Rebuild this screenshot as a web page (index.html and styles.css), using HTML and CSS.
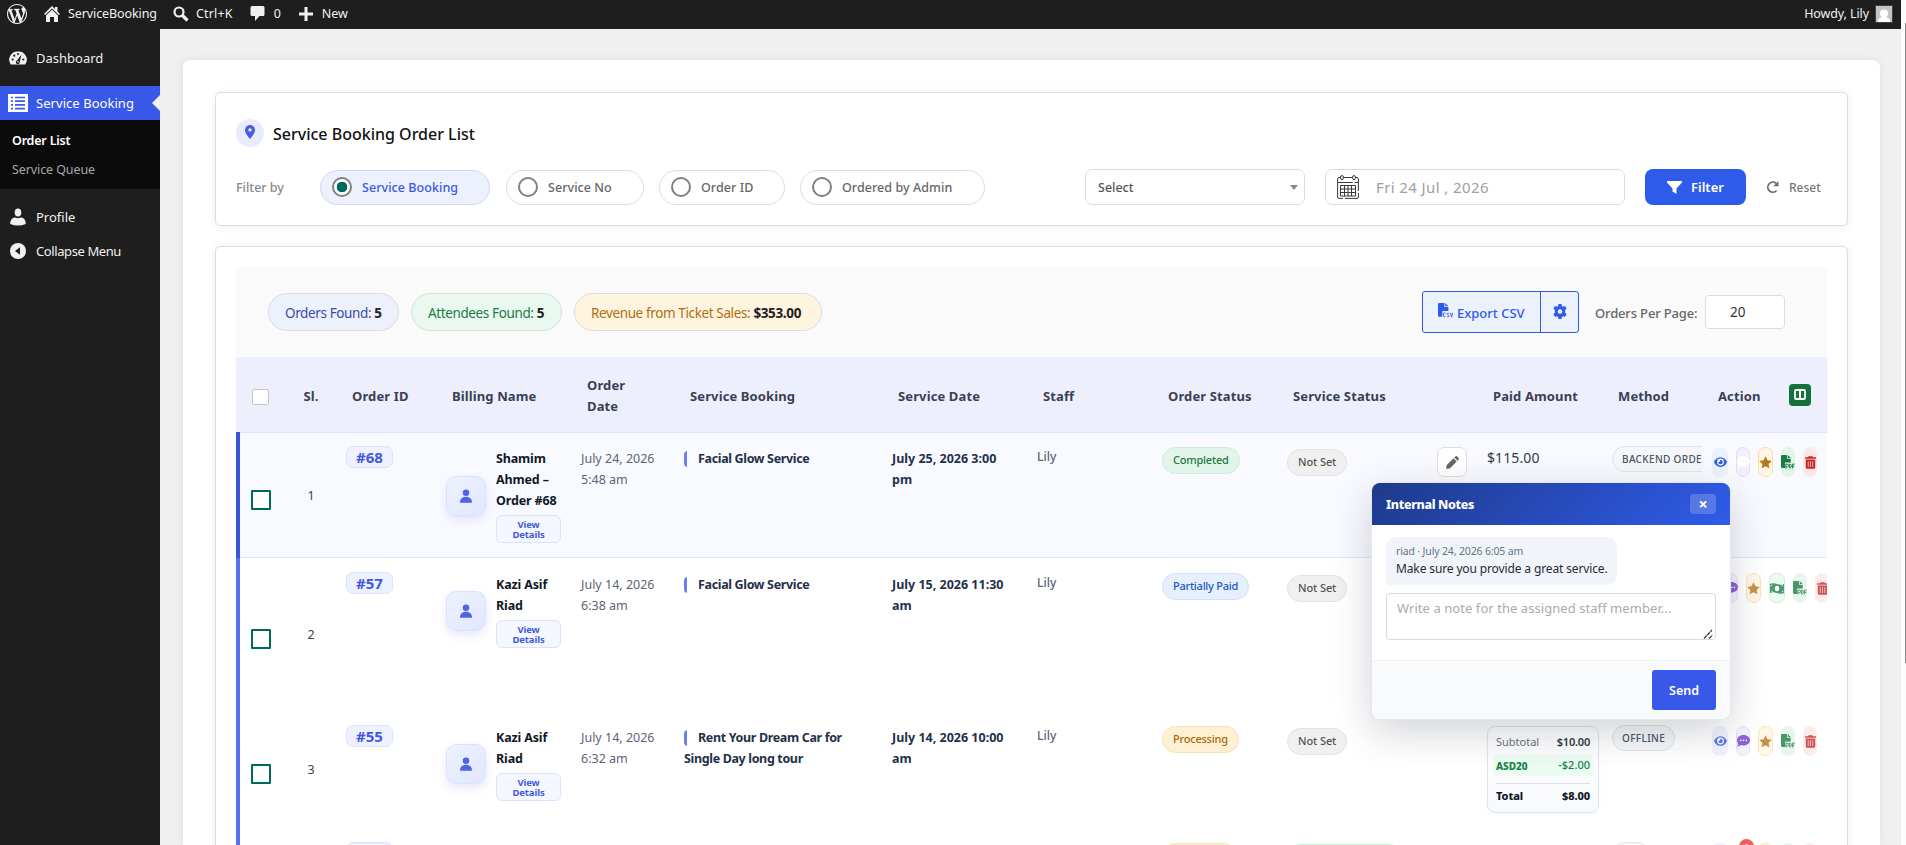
FILE: index.html
```html
<!DOCTYPE html>
<html lang="en">
<head>
    <meta charset="UTF-8">
    <meta name="viewport" content="width=device-width, initial-scale=1.0">
    <title>Service Booking Order List</title>
    <link rel="stylesheet" href="styles.css">
</head>
<body>
    <!-- Shared icons -->
    <svg class="sprite">
        <symbol id="i-user" viewBox="0 0 14 16"><circle cx="7" cy="4.2" r="3.8"/><path d="M0 16c0-4.500 2.500-7 7-7s7 2.500 7 7z"/></symbol>
        <symbol id="i-eye" viewBox="0 0 24 18"><path d="M12 0C6 0 2 4 0 9c2 5 6 9 12 9s10-4 12-9c-2-5-6-9-12-9z"/><circle cx="12" cy="9" r="6.300" fill="#fff"/><path d="M12 4.800a4.200 4.200 0 1 1-4.200 4.200c1.800.6 3.600-.6 4.200-4.200z"/></symbol>
        <symbol id="i-chat" viewBox="0 0 24 22"><path d="M12 0c6.600 0 12 4.300 12 9.700s-5.400 9.700-12 9.700c-1.800 0-3.500-.3-5-.9C5.500 20 3 21.500 0 21.500c1.500-1.600 2.300-3.400 2.400-5C.9 14.600 0 12.300 0 9.700 0 4.300 5.400 0 12 0z"/><g fill="#f3effe"><circle cx="6.800" cy="9.700" r="1.600"/><circle cx="12" cy="9.700" r="1.600"/><circle cx="17.200" cy="9.700" r="1.600"/></g></symbol>
        <symbol id="i-star" viewBox="0 0 24 23"><path d="M12 0l3.500 7.400 8.200 1.100-6 5.600 1.500 8.100L12 18.300l-7.200 3.900 1.500-8.100-6-5.600 8.200-1.100z"/></symbol>
        <symbol id="i-file" viewBox="0 0 26 26"><path d="M0 2a2 2 0 0 1 2-2h9v7h7v7H7.500v10H2a2 2 0 0 1-2-2zM12.500 0l5.500 5.500h-5.500z"/><path d="M9 25v-8h2.500a2 2 0 0 1 0 5H9M15.500 17v7h1.500c3 0 3-7 0-7zM21.500 25v-8h4M21.500 21h3.500" fill="none" stroke="currentColor" stroke-width="1.800"/></symbol>
        <symbol id="i-csv" viewBox="0 0 26 26"><path d="M0 2a2 2 0 0 1 2-2h9v7h7v7H7.500v10H2a2 2 0 0 1-2-2zM12.500 0l5.500 5.500h-5.500z"/><path d="M13 18.500c0-2-3.500-2-3.500 0v4c0 2 3.500 2 3.500 0M19 18.500c-1-2-3.500-1-3 .7s3 1.500 3 3.300-2.500 2.200-3.500.5M21.500 17l2 7.500 2-7.500" fill="none" stroke="currentColor" stroke-width="1.600"/></symbol>
        <symbol id="i-trash" viewBox="0 0 22 25"><path d="M7 0h8l1 2h6v3H0V2h6zM1.500 6.500h19V22a3 3 0 0 1-3 3h-13a3 3 0 0 1-3-3z"/><path d="M6.500 10v11.500M11 10v11.500M15.500 10v11.500" stroke="#fbd5d5" stroke-width="1.500"/></symbol>
        <symbol id="i-money" viewBox="0 0 28 22"><path d="M0 2c4-2.500 9-2 14 0s10 2.500 14 0v18c-4 2.500-9 2-14 0s-10-2.500-14 0z"/><ellipse cx="14" cy="11" rx="4.500" ry="5.500" fill="#fff"/><path d="M2.500 7V4.500q2.500 0 2.500-1M25.500 15v2.500q-2.500 0-2.500 1M2.500 16q2.500 0 3 2.500M25.500 6q-2.500 0-3-2.500" stroke="#fff" stroke-width="1.500" fill="none"/></symbol>
    </svg>

    <header class="adminbar">
        <svg class="wp-logo" viewBox="0 0 20 20"><path fill="currentColor" d="M20 10c0-5.510-4.490-10-10-10C4.480 0 0 4.490 0 10c0 5.520 4.480 10 10 10 5.510 0 10-4.480 10-10zM7.780 15.370L4.370 6.220c.55-.02 1.170-.08 1.170-.08.5-.06.44-1.130-.06-1.110 0 0-1.450.11-2.370.11-.18 0-.37 0-.58-.01C4.120 2.690 6.870 1.110 10 1.110c2.330 0 4.450.87 6.050 2.340-.68-.11-1.650.39-1.650 1.580 0 .74.45 1.360.9 2.100.35.61.55 1.360.55 2.460 0 1.490-1.400 5-1.400 5l-3.030-8.370c.54-.02.82-.17.82-.17.5-.05.44-1.250-.06-1.220 0 0-1.440.12-2.380.12-.87 0-2.330-.12-2.330-.12-.5-.03-.56 1.200-.06 1.220l.92.08 1.260 3.410zM17.410 10c.24-.64.74-1.870.43-4.250.7 1.290 1.050 2.710 1.050 4.250 0 3.290-1.730 6.240-4.400 7.780.97-2.590 1.940-5.200 2.920-7.780zM6.100 18.090C3.120 16.650 1.110 13.530 1.110 10c0-1.300.23-2.480.72-3.590C3.250 10.300 4.670 14.200 6.100 18.090zm4.030-6.630l2.580 6.980c-.86.29-1.760.45-2.710.45-.79 0-1.570-.11-2.290-.33.81-2.380 1.620-4.740 2.420-7.100z"/></svg>
        <a class="bar-item bar-home">
            <svg width="16" height="16" viewBox="0 0 16 16"><path d="M8 0l3 3V1h2.500v4.500L16 8l-1.200 1L8 2.500 1.200 9 0 8z" fill="currentColor"/><path d="M2 9.500l6-5.700 6 5.700V16h-4v-5H6v5H2z" fill="currentColor"/></svg>
            <span>ServiceBooking</span>
        </a>
        <a class="bar-item bar-search">
            <svg width="16" height="16" viewBox="0 0 16 16"><circle cx="6" cy="6" r="4.500" fill="none" stroke="currentColor" stroke-width="2.200"/><path d="M9 9l5.500 5.500" stroke="currentColor" stroke-width="3.200"/></svg>
            <span>Ctrl+K</span>
        </a>
        <a class="bar-item bar-comments">
            <svg width="15" height="17" viewBox="0 0 15 17"><path d="M2 1h11a1.500 1.500 0 0 1 1.500 1.500v7A1.500 1.500 0 0 1 13 11H9.500L5 16v-5H2A1.500 1.500 0 0 1 .5 9.500v-7A1.500 1.500 0 0 1 2 1z" fill="currentColor"/></svg>
            <span>0</span>
        </a>
        <a class="bar-item bar-new">
            <svg width="14" height="14" viewBox="0 0 14 14"><path d="M7 0v14M0 7h14" stroke="currentColor" stroke-width="3"/></svg>
            <span>New</span>
        </a>
        <a class="bar-user">
            <span>Howdy, Lily</span>
            <svg width="18" height="18" viewBox="0 0 18 18"><path fill="#3c3f44" d="M0 0h18v18H0z"/><path fill="#c5c5c5" d="M1 1h16v16H1z"/><circle cx="9" cy="8.500" r="4" fill="#fff"/><path d="M3 17c0-3.500 2-5 6-5s6 1.500 6 5z" fill="#fff"/></svg>
        </a>
    </header>

    <div class="wrap">
        <aside class="sidebar">
            <a class="menu-item menu-dash"><svg width="18" height="18" viewBox="0 0 18 18"><path d="M9 2.500A8.200 8.200 0 0 0 1.800 15.500h14.400A8.200 8.200 0 0 0 9 2.500z" fill="#f0f0f1"/><g fill="#1e1e1e"><circle cx="3.700" cy="10.500" r="1.100"/><circle cx="5.300" cy="6.700" r="1.100"/><circle cx="9" cy="5" r="1.100"/><circle cx="14.300" cy="10.500" r="1.100"/><path d="M12.500 5.500l-1.700 7.300a2 2 0 1 1-2.600-1.600z"/></g><circle cx="8.900" cy="12.800" r=".8" fill="#f0f0f1"/></svg><span>Dashboard</span></a>
            <a class="menu-item menu-active"><svg width="20" height="18" viewBox="0 0 20 18"><path d="M0 0h20v18H0z" fill="#fff"/><path d="M3 3.500h2M7 3.500h10M3 7.200h2M7 7.200h10M3 10.900h2M7 10.900h10M3 14.600h2M7 14.600h10" stroke="#3858e9" stroke-width="1.700"/></svg><span>Service Booking</span></a>
            <div class="submenu">
                <a class="current">Order List</a>
                <a>Service Queue</a>
            </div>
            <a class="menu-item menu-profile"><svg width="18" height="18" viewBox="0 0 18 18" fill="#f0f0f1"><ellipse cx="9" cy="4.500" rx="3.300" ry="4"/><path d="M1.200 16c0-4.500 2.500-6.500 5-6.500Q9 11 11.800 9.500c2.500 0 5 2 5 6.500Q9 19 1.200 16z"/></svg><span>Profile</span></a>
            <a class="menu-item menu-collapse"><svg width="18" height="18" viewBox="0 0 18 18"><circle cx="9" cy="9" r="8" fill="#f0f0f1"/><path d="M11 5.200v7.600L6 9z" fill="#1e1e1e"/></svg><span>Collapse Menu</span></a>
        </aside>

        <main class="content">
            <section class="panel filter-panel">
                <div class="panel-title">
                    <span class="title-icon"><svg width="10" height="14" viewBox="0 0 10 14"><path fill-rule="evenodd" d="M5 0a5 5 0 0 1 5 5c0 3-3.500 7-5 9-1.500-2-5-6-5-9a5 5 0 0 1 5-5zm0 3.200a1.700 1.700 0 1 0 0 3.400 1.700 1.700 0 0 0 0-3.400z" fill="#4a5bdc"/></svg></span>
                    <h1>Service Booking Order List</h1>
                </div>
                <div class="filter-row">
                    <span class="filter-label">Filter by</span>
                    <div class="chips">
                        <label class="chip chip-1 checked"><i class="radio"></i><span>Service Booking</span></label>
                        <label class="chip chip-2"><i class="radio"></i><span>Service No</span></label>
                        <label class="chip chip-3"><i class="radio"></i><span>Order ID</span></label>
                        <label class="chip chip-4"><i class="radio"></i><span>Ordered by Admin</span></label>
                    </div>
                    <div class="select"><span>Select</span><i class="caret"></i></div>
                    <div class="date">
                        <svg width="22" height="24" viewBox="0 0 22 24" fill="none" stroke="#3a3a3a"><path d="M3.500 2.500H2A1.500 1.500 0 0 0 .6 4v18A1.500 1.500 0 0 0 2 23.400h4M8 23.400h12a1.500 1.500 0 0 0 1.400-1.400v-4M21.400 16V4A1.500 1.500 0 0 0 20 2.500h-1.500M6.500 2.500h9M.6 7.500h15M17.500 7.500h4"/><rect x="3.600" y=".6" width="2.800" height="4" rx="1.400"/><rect x="15.600" y=".6" width="2.800" height="4" rx="1.400"/><path d="M3.500 10.500h15v10.500h-15zM7.500 10.500V21M11 10.500V21M14.500 10.500V21M3.500 14h15M3.500 17.500h15"/></svg>
                        <span>Fri 24 Jul , 2026</span>
                    </div>
                    <button class="btn-filter"><svg width="15" height="13" viewBox="0 0 15 13"><path d="M0 0h15v1.500L9.500 7.500V13l-4-2.500v-3L0 1.500z" fill="#fff"/></svg>Filter</button>
                    <a class="reset"><svg width="13" height="13" viewBox="0 0 13 13"><path d="M10 2.300A5 5 0 1 0 10.600 9.500" fill="none" stroke="#6b6b6b" stroke-width="1.800"/><path d="M12.500 0v5.200H7.300z" fill="#6b6b6b"/></svg>Reset</a>
                </div>
            </section>

            <section class="panel list-panel">
                <div class="toolbar">
                    <div class="stats">
                        <span class="stat stat-orders">Orders Found: <b>5</b></span>
                        <span class="stat stat-attendees">Attendees Found: <b>5</b></span>
                        <span class="stat stat-revenue">Revenue from Ticket Sales: <b>$353.00</b></span>
                    </div>
                    <div class="tools">
                        <div class="export">
                            <a class="export-main"><svg width="15" height="15"><use href="#i-csv"/></svg><span>Export CSV</span></a>
                            <a class="export-gear"><svg width="14" height="15" viewBox="0 0 14 15"><path d="M5.500 0h3l.4 2 1.200.7 1.900-.8 1.600 2.700-1.500 1.500v2.700l1.500 1.500-1.600 2.600-1.900-.7-1.200.7-.4 2.100h-3l-.4-2.100-1.200-.7-1.900.7L.4 10.300l1.500-1.500V6.100L.4 4.600 2 1.900l1.900.8L5.100 2z" fill="currentColor"/><circle cx="7" cy="7.500" r="2.300" fill="#ecf1fe"/></svg></a>
                        </div>
                        <span class="per-label">Orders Per Page:</span>
                        <span class="per-input">20</span>
                    </div>
                </div>

                <table class="orders">
                    <colgroup><col class="c-check"><col class="c-sl"><col class="c-id"><col class="c-name"><col class="c-date"><col class="c-service"><col class="c-sdate"><col class="c-staff"><col class="c-ostatus"><col class="c-sstatus"><col class="c-paid"><col class="c-method"><col class="c-action"></colgroup>
                    <thead>
                        <tr>
                            <th><i class="box-sm"></i></th>
                            <th class="center">Sl.</th>
                            <th>Order ID</th>
                            <th>Billing Name</th>
                            <th>Order<br>Date</th>
                            <th>Service Booking</th>
                            <th>Service Date</th>
                            <th>Staff</th>
                            <th>Order Status</th>
                            <th>Service Status</th>
                            <th>Paid Amount</th>
                            <th>Method</th>
                            <th><div class="th-action">Action<span class="cols-btn"><svg width="12" height="11" viewBox="0 0 12 11"><rect x="1" y="1" width="10" height="9" rx="1" fill="none" stroke="#fff" stroke-width="1.800"/><path d="M6 1v9" stroke="#fff" stroke-width="2"/></svg></span></div></th>
                        </tr>
                    </thead>
                    <tbody>
                        <tr class="row-1 hovered">
                            <td class="mid"><i class="box"></i></td>
                            <td class="mid center num">1</td>
                            <td><span class="oid">#68</span></td>
                            <td><div class="person"><span class="avatar"><svg width="12" height="14"><use href="#i-user"/></svg></span><div><div class="pname">Shamim<br>Ahmed &ndash;<br>Order #68</div><a class="details">View<br>Details</a></div></div></td>
                            <td class="odate">July 24, 2026<br>5:48 am</td>
                            <td class="service"><i class="mark"></i>Facial Glow Service</td>
                            <td class="sdate">July 25, 2026 3:00<br>pm</td>
                            <td class="staff">Lily</td>
                            <td><span class="tag green">Completed</span></td>
                            <td><div class="sstatus"><span class="tag grey">Not Set</span><span class="edit"><svg width="13" height="13" viewBox="0 0 13 13"><path d="M0 13l.8-4L7.500 2.300l3.200 3.200L4 12.200zM8.300 1.500L9.500.4q.8-.7 1.600 0l1.500 1.500q.7.8 0 1.600l-1.100 1.200z" fill="#666"/></svg></span></div></td>
                            <td class="amount">$115.00</td>
                            <td><div class="clip"><span class="method">BACKEND ORDER</span></div></td>
                            <td><div class="actions">
                                <span class="act eye"><svg width="13" height="10"><use href="#i-eye"/></svg></span>
                                <span class="act chat on"><svg width="13" height="12"><use href="#i-chat"/></svg></span>
                                <span class="act star"><svg width="13" height="13"><use href="#i-star"/></svg></span>
                                <span class="act pdf"><svg width="14" height="14"><use href="#i-file"/></svg></span>
                                <span class="act trash"><svg width="11" height="13"><use href="#i-trash"/></svg></span>
                            </div></td>
                        </tr>
                        <tr class="row-2">
                            <td class="mid"><i class="box"></i></td>
                            <td class="mid center num">2</td>
                            <td><span class="oid">#57</span></td>
                            <td><div class="person"><span class="avatar"><svg width="12" height="14"><use href="#i-user"/></svg></span><div><div class="pname">Kazi Asif<br>Riad</div><a class="details">View<br>Details</a></div></div></td>
                            <td class="odate">July 14, 2026<br>6:38 am</td>
                            <td class="service"><i class="mark"></i>Facial Glow Service</td>
                            <td class="sdate">July 15, 2026 11:30<br>am</td>
                            <td class="staff">Lily</td>
                            <td><span class="tag blue">Partially Paid</span></td>
                            <td><div class="sstatus"><span class="tag grey">Not Set</span></div></td>
                            <td></td>
                            <td></td>
                            <td><div class="actions actions-wide">
                                <span class="act chat"><svg width="13" height="12"><use href="#i-chat"/></svg></span>
                                <span class="act star"><svg width="13" height="13"><use href="#i-star"/></svg></span>
                                <span class="act money"><svg width="14" height="11"><use href="#i-money"/></svg></span>
                                <span class="act pdf"><svg width="14" height="14"><use href="#i-file"/></svg></span>
                                <span class="act trash"><svg width="11" height="13"><use href="#i-trash"/></svg></span>
                            </div></td>
                        </tr>
                        <tr class="row-3">
                            <td class="mid"><i class="box"></i></td>
                            <td class="mid center num">3</td>
                            <td><span class="oid">#55</span></td>
                            <td><div class="person"><span class="avatar"><svg width="12" height="14"><use href="#i-user"/></svg></span><div><div class="pname">Kazi Asif<br>Riad</div><a class="details">View<br>Details</a></div></div></td>
                            <td class="odate">July 14, 2026<br>6:32 am</td>
                            <td class="service"><i class="mark"></i>Rent Your Dream Car for<br>Single Day long tour</td>
                            <td class="sdate">July 14, 2026 10:00<br>am</td>
                            <td class="staff">Lily</td>
                            <td><span class="tag amber">Processing</span></td>
                            <td><div class="sstatus"><span class="tag grey">Not Set</span></div></td>
                            <td><div class="totals">
                                <div class="t-line"><span>Subtotal</span><b>$10.00</b></div>
                                <div class="t-line coupon"><b>ASD20</b><span>-$2.00</span></div>
                                <div class="t-line total"><b>Total</b><b>$8.00</b></div>
                            </div></td>
                            <td><span class="method">OFFLINE</span></td>
                            <td><div class="actions">
                                <span class="act eye"><svg width="13" height="10"><use href="#i-eye"/></svg></span>
                                <span class="act chat"><svg width="13" height="12"><use href="#i-chat"/></svg></span>
                                <span class="act star"><svg width="13" height="13"><use href="#i-star"/></svg></span>
                                <span class="act pdf"><svg width="14" height="14"><use href="#i-file"/></svg></span>
                                <span class="act trash"><svg width="11" height="13"><use href="#i-trash"/></svg></span>
                            </div></td>
                        </tr>
                        <tr class="row-4">
                            <td></td>
                            <td></td>
                            <td><span class="oid"></span></td>
                            <td></td>
                            <td></td>
                            <td></td>
                            <td></td>
                            <td></td>
                            <td><span class="tag amber tag-mid"></span></td>
                            <td><div class="sstatus"><span class="tag green tag-long"></span></div></td>
                            <td></td>
                            <td><span class="method method-sm"></span></td>
                            <td><div class="actions">
                                <span class="act eye"></span>
                                <span class="act chat"><i class="count">1</i></span>
                                <span class="act star"></span>
                                <span class="act pdf"></span>
                                <span class="act trash"></span>
                            </div></td>
                        </tr>
                    </tbody>
                </table>
            </section>
        </main>
        <div class="scroll"><i></i></div>
    </div>

    <!-- Internal notes popup -->
    <div class="notes">
        <div class="notes-head"><b>Internal Notes</b><span class="notes-close">&times;</span></div>
        <div class="notes-body">
            <div class="note">
                <div class="note-meta">riad &middot; July 24, 2026 6:05 am</div>
                <div class="note-text">Make sure you provide a great service.</div>
            </div>
            <div class="note-input">Write a note for the assigned staff member...
                <svg width="10" height="10" viewBox="0 0 10 10"><path d="M1 9.500L9 1M6 9.500L9.500 6" stroke="#444" stroke-width="1.400" stroke-dasharray="4 .6"/></svg>
            </div>
        </div>
        <div class="notes-foot"><button class="send">Send</button></div>
    </div>
</body>
</html>
```
FILE: styles.css
```css
/* General Styles */
* {
    margin: 0;
    padding: 0;
    box-sizing: border-box;
}

html, body {
    height: 100%;
    overflow: hidden;
}

body {
    background: #f0f0f0;
    font-family: "Noto Sans", "Open Sans", sans-serif;
    font-size: 13px;
    color: #333;
    position: relative;
}

.sprite {
    display: none;
}

svg {
    display: block;
    flex: none;
}

button {
    font-family: inherit;
    border: none;
}

/* Admin bar */
.adminbar {
    display: flex;
    align-items: center;
    height: 29px;
    margin-right: 5px;
    padding: 0 17px 2px 7px;
    background: #1e1e1e;
    color: #f0f0f1;
    font-size: 12.500px;
    letter-spacing: -0.100px;
}

.wp-logo {
    width: 20px;
    height: 20px;
}

.bar-item {
    display: flex;
    align-items: center;
}

.bar-home {
    margin-left: 17px;
    gap: 8px;
}

.bar-search {
    margin-left: 16px;
    gap: 7px;
    letter-spacing: 0.200px;
}

.bar-comments {
    margin-left: 17px;
    gap: 9px;
}

.bar-new {
    margin-left: 18px;
    gap: 9px;
}

.bar-user {
    display: flex;
    align-items: center;
    gap: 6px;
    margin-left: auto;
    margin-right: -9px;
}

.wrap {
    display: flex;
    height: 816px;
}

/* Sidebar */
.sidebar {
    width: 160px;
    flex: none;
    padding-top: 12px;
    background: #1e1e1e;
    color: #f0f0f1;
}

.menu-item {
    display: flex;
    align-items: center;
    height: 34px;
    padding-left: 9px;
    gap: 9px;
    font-size: 13px;
}

.menu-dash {
    margin-bottom: 11px;
}

.menu-active {
    background: #3858e9;
    color: #fff;
    padding-left: 8px;
    gap: 8px;
    letter-spacing: 0.050px;
    position: relative;
}

.menu-active::after {
    content: "";
    position: absolute;
    right: 0;
    top: 9px;
    border: 8px solid transparent;
    border-right-color: #f0f0f0;
    border-left: none;
}

.submenu {
    height: 69px;
    padding: 6px 12px 0;
    background: #0b0b0b;
    font-size: 12.500px;
}

.submenu a {
    display: block;
    line-height: 30px;
    height: 29px;
    color: #a7a7a7;
    letter-spacing: -0.100px;
}

.submenu .current {
    color: #fff;
    font-weight: 600;
    letter-spacing: -0.200px;
}

.menu-profile {
    margin-top: 11px;
}

.menu-collapse {
    letter-spacing: -0.400px;
}

/* Content */
.content {
    width: 1697px;
    height: 785px;
    margin: 31px 0 0 23px;
    padding: 32px 32px 0;
    flex: none;
    overflow: hidden;
    background: #fff;
    border-radius: 7px 7px 0 0;
    box-shadow: 0 0 8px rgba(0, 0, 0, 0.08);
}

.scroll {
    width: 5px;
    height: 845px;
    margin: -29px 0 0 auto;
    background: #fcfcfc;
    display: flex;
    justify-content: flex-end;
}

.scroll i {
    width: 1px;
    height: 640px;
    margin-top: 23px;
    background: #888;
}

.panel {
    width: 1633px;
    border: 1px solid #ddd;
    border-radius: 5px;
    background: #fff;
    box-shadow: 0 1px 10px rgba(0, 0, 0, 0.07);
}

/* Filter panel */
.filter-panel {
    height: 134px;
    padding: 26px 20px 0;
    margin-bottom: 20px;
}

.panel-title {
    display: flex;
    align-items: center;
    gap: 9px;
    height: 28px;
}

.title-icon {
    display: flex;
    align-items: center;
    justify-content: center;
    width: 28px;
    height: 28px;
    padding-bottom: 2px;
    border-radius: 50%;
    background: #e8ebfd;
}

.panel-title h1 {
    font-size: 16px;
    font-weight: 500;
    color: #111;
    padding-top: 2px;
    white-space: nowrap;
}

.filter-row {
    display: flex;
    align-items: center;
    height: 36px;
    margin-top: 22px;
}

.filter-label {
    width: 84px;
    font-weight: 500;
    font-size: 12.500px;
    color: #888;
}

.chips {
    display: flex;
    height: 35px;
    width: 765px;
    margin-top: 1px;
}

.chip {
    display: flex;
    align-items: center;
    gap: 10px;
    height: 35px;
    padding-left: 11px;
    border: 1px solid #ddd;
    border-radius: 18px;
    font-size: 12.500px;
    font-weight: 500;
    letter-spacing: 0.060px;
    color: #666;
    white-space: nowrap;
}

.chip-1 {
    width: 170px;
    margin-right: 16px;
}

.chip-2 {
    width: 138px;
    margin-right: 15px;
}

.chip-3 {
    width: 126px;
    margin-right: 15px;
}

.chip-4 {
    width: 185px;
}

.chip.checked {
    background: #edf1fe;
    border-color: #cdd8fc;
    color: #3858e9;
}

.radio {
    width: 20px;
    height: 20px;
    margin-top: -2px;
    border: 2px solid #808080;
    border-radius: 50%;
    background: #fff;
}

.checked .radio {
    background: radial-gradient(circle, #00695c 5px, #fff 5.600px);
}

.select {
    display: flex;
    align-items: center;
    justify-content: space-between;
    width: 220px;
    height: 36px;
    padding: 1px 6px 0 12px;
    border: 1px solid #ddd;
    border-radius: 7px;
    font-weight: 500;
    color: #555;
    font-size: 12.500px;
}

.caret {
    border: 4px solid transparent;
    border-top: 5px solid #888;
    border-bottom: none;
}

.date {
    display: flex;
    align-items: center;
    gap: 17px;
    width: 300px;
    height: 36px;
    margin-left: 20px;
    padding-left: 11px;
    border: 1px solid #ddd;
    border-radius: 7px;
    font-size: 15px;
    letter-spacing: 0.400px;
    color: #a0a0a0;
}

.btn-filter {
    display: flex;
    align-items: center;
    gap: 9px;
    width: 101px;
    height: 36px;
    margin-left: 20px;
    padding-left: 22px;
    border-radius: 8px;
    background: #2f5bea;
    color: #fff;
    font-size: 13px;
    font-weight: 600;
}

.reset {
    display: flex;
    align-items: center;
    gap: 10px;
    margin-left: 20px;
    color: #777;
    font-weight: 500;
    font-size: 12px;
}

/* List panel */
.list-panel {
    padding: 20px;
}

.toolbar {
    display: flex;
    justify-content: space-between;
    height: 90px;
    padding: 24px 42px 0 32px;
    background: #fafafa;
}

.stats {
    display: flex;
    gap: 12px;
    padding-top: 2px;
}

.stat {
    height: 38px;
    line-height: 38px;
    padding: 0 16px;
    border: 1px solid #ddd;
    border-radius: 19px;
    font-size: 13.500px;
    letter-spacing: -0.380px;
    white-space: nowrap;
}

.stat b {
    color: #222;
    letter-spacing: -0.350px;
}

.stat-orders {
    width: 131px;
    background: #edf1fe;
    color: #3b4ba8;
}

.stat-attendees {
    width: 151px;
    background: #e9f9ef;
    color: #1d7a45;
}

.stat-revenue {
    width: 248px;
    background: #fff4e0;
    color: #b06f0c;
}

.tools {
    display: flex;
}

.export {
    display: flex;
    width: 157px;
    height: 42px;
    border: 1px solid #2f5bea;
    border-radius: 3px;
    background: #ecf1fe;
    color: #2f5bea;
    font-size: 13px;
}

.export-main {
    display: flex;
    align-items: center;
    width: 118px;
    gap: 4px;
    padding: 2px 0 0 15px;
    border-right: 1px solid #2f5bea;
    white-space: nowrap;
    font-weight: 500;
}

.export-main svg {
    margin-top: -5px;
    fill: #2f5bea;
}

.export-gear {
    padding: 12px 0 0 12px;
}

.per-label {
    width: 110px;
    margin-left: 16px;
    line-height: 44px;
    letter-spacing: -0.150px;
    color: #666;
    font-weight: 500;
    white-space: nowrap;
}

.per-input {
    width: 80px;
    height: 34px;
    margin-top: 4px;
    padding-left: 24px;
    line-height: 32px;
    border: 1px solid #ddd;
    border-radius: 4px;
    background: #fff;
    font-size: 13.500px;
}

/* Orders table */
.orders {
    width: 1591px;
    table-layout: fixed;
    border-collapse: separate;
    border-spacing: 0;
}

.c-check { width: 48px; }
.c-sl { width: 54px; }
.c-id { width: 100px; }
.c-name { width: 135px; }
.c-date { width: 103px; }
.c-service { width: 208px; }
.c-sdate { width: 145px; }
.c-staff { width: 125px; }
.c-ostatus { width: 125px; }
.c-sstatus { width: 200px; }
.c-paid { width: 125px; }
.c-method { width: 100px; }
.c-action { width: 123px; }

.orders th {
    height: 75px;
    padding: 3px 0 0 14px;
    background: #edeffc;
    color: #3b3f56;
    font-size: 13px;
    font-weight: 700;
    letter-spacing: 0.120px;
    line-height: 21px;
    text-align: left;
    white-space: nowrap;
}

.orders th.center,
.orders td.center {
    padding-left: 0;
    text-align: center;
}

.orders th:first-child {
    padding: 4px 0 0 16px;
}

.box-sm {
    display: block;
    width: 17px;
    height: 16px;
    border: 1px solid #c5c5c5;
    border-radius: 2px;
    background: #fff;
}

.th-action {
    display: flex;
    justify-content: space-between;
    padding-right: 16px;
}

.cols-btn {
    display: flex;
    align-items: center;
    justify-content: center;
    width: 22px;
    height: 22px;
    margin-top: -2px;
    border-radius: 4px;
    background: #15703c;
}

.orders td {
    padding: 14px 0 0 8px;
    vertical-align: top;
}

.orders td.mid {
    vertical-align: middle;
    padding-top: 0;
}

.orders td:first-child {
    border-left: 4px solid #5b72ee;
    padding-left: 11px;
    padding-top: 9px;
}

.orders .hovered td {
    background: #f9faff;
    box-shadow: inset 0 1px #dde3fb, inset 0 -1px #dde3fb;
}

.orders .hovered td:first-child {
    border-left-color: #3f55d8;
}

.row-1 { height: 126px; }
.row-2 { height: 153px; }
.row-3 { height: 117px; }
.row-4 { height: 60px; }

.box {
    display: block;
    width: 20px;
    height: 20px;
    border: 2px solid #00695c;
    border-radius: 1px;
    background: #fff;
}

.num {
    font-size: 12.500px;
    color: #444;
}

.oid {
    display: block;
    width: 47px;
    height: 22px;
    line-height: 21px;
    text-align: center;
    border: 1px solid #dbe2fd;
    border-radius: 7px;
    background: #eef2ff;
    color: #4358dc;
    font-size: 15px;
    font-weight: 700;
}

.person {
    display: flex;
    align-items: center;
    gap: 10px;
    padding-top: 2px;
}

.avatar {
    display: flex;
    align-items: center;
    justify-content: center;
    width: 40px;
    height: 40px;
    flex: none;
    border: 1px solid #dbe2fd;
    border-radius: 10px;
    background: linear-gradient(135deg, #eef2ff, #e0e7ff);
    box-shadow: 0 4px 10px rgba(80, 100, 230, 0.15);
    fill: #4f63e7;
}

.pname {
    font-size: 12.500px;
    font-weight: 700;
    letter-spacing: -0.150px;
    line-height: 21px;
    color: #111827;
    white-space: nowrap;
}

.details {
    display: block;
    width: 65px;
    height: 28px;
    margin-top: 4px;
    padding-top: 4px;
    border: 1px solid #dbe2fd;
    border-radius: 6px;
    background: #f5f7ff;
    color: #4358dc;
    font-size: 9.500px;
    font-weight: 700;
    letter-spacing: -0.100px;
    line-height: 10px;
    text-align: center;
}

.orders .odate {
    padding-top: 16px;
    line-height: 21px;
    font-size: 12.500px;
    color: #5b6478;
}

.orders .service,
.orders .sdate {
    padding-top: 16px;
    line-height: 21px;
    font-size: 12.500px;
    font-weight: 700;
    letter-spacing: -0.350px;
    color: #24304a;
    white-space: nowrap;
}

.orders .sdate {
    letter-spacing: 0;
}

.mark {
    display: inline-block;
    width: 4px;
    height: 16px;
    margin-right: 10px;
    vertical-align: -4px;
    border-radius: 4px 0 0 4px;
    background: linear-gradient(90deg, #6b7df0 75%, transparent 75%);
}

.orders .staff {
    padding-top: 16px;
    line-height: 18px;
    font-size: 12px;
    font-weight: 500;
    color: #5b6478;
}

.tag {
    display: inline-block;
    height: 27px;
    line-height: 24px;
    margin-top: 1px;
    padding: 0 10px;
    border: 1px solid #ddd;
    border-radius: 14px;
    font-size: 11px;
    font-weight: 500;
    letter-spacing: -0.220px;
    white-space: nowrap;
    vertical-align: top;
}

.tag.green {
    background: #e2f5e9;
    border-color: #cdebd8;
    color: #1d7a45;
}

.tag.blue {
    background: #e6effe;
    border-color: #d2e0fa;
    color: #2257c9;
    letter-spacing: -0.250px;
}

.tag.amber {
    background: #fef0d2;
    border-color: #f5e2b5;
    color: #a8690f;
}

.tag.grey {
    background: #f0f0f0;
    border-color: #e3e3e3;
    color: #555;
    margin-top: 3px;
    letter-spacing: -0.100px;
}

.tag-mid {
    width: 75px;
}

.tag-long {
    width: 115px;
    margin-top: 2px;
}

.sstatus {
    display: flex;
    justify-content: space-between;
    padding-right: 12px;
}

.edit {
    display: flex;
    align-items: center;
    justify-content: center;
    width: 30px;
    height: 30px;
    margin-top: 1px;
    border: 1px solid #ddd;
    border-radius: 7px;
    background: #fff;
}

.orders .amount {
    font-size: 14px;
    line-height: 23px;
    letter-spacing: 0.100px;
    color: #333a4a;
}

.clip {
    width: 90px;
    overflow: hidden;
}

.method {
    display: inline-block;
    height: 26px;
    line-height: 24px;
    padding: 0 9px;
    border: 1px solid #e1e4ea;
    border-radius: 13px;
    background: #f5f7fa;
    color: #4b5563;
    font-size: 10px;
    font-weight: 500;
    letter-spacing: 0.350px;
    white-space: nowrap;
    vertical-align: top;
}

.method-sm {
    width: 38px;
}

/* Row actions */
.actions {
    display: flex;
    gap: 8px;
    padding-top: 1px;
    opacity: 0.800;
}

.hovered .actions {
    opacity: 1;
}

.actions-wide {
    margin-left: 12px;
    width: 103px;
    overflow: hidden;
}

.act {
    display: flex;
    align-items: center;
    justify-content: center;
    width: 14px;
    height: 30px;
    flex: none;
    border-radius: 7px;
    position: relative;
}

.eye {
    width: 16px;
    background: #ecf1fe;
    color: #2f5bea;
    fill: #2f5bea;
}

.chat {
    border: 1px solid #e3dcfb;
    background: #f3effe;
    fill: #6d3fc9;
}

.chat.on {
    fill: #fff;
}

.star {
    width: 15px;
    border: 1px solid #fbe0a4;
    background: #fff7e4;
    fill: #b8761b;
}

.money {
    width: 16px;
    border: 1px solid #bdeccd;
    background: #ebfbf1;
    fill: #178049;
}

.pdf {
    background: #e0f5e8;
    color: #1d7a45;
    fill: #1d7a45;
}

.trash {
    background: #fde8e8;
    fill: #c62828;
}

.count {
    position: absolute;
    left: 2px;
    top: -5px;
    width: 15px;
    height: 15px;
    line-height: 15px;
    border-radius: 50%;
    background: #e53935;
    color: #fff;
    font-size: 9px;
    font-style: normal;
    font-weight: 700;
    text-align: center;
}

/* Order totals */
.totals {
    width: 112px;
    height: 87px;
    margin-top: 1px;
    padding: 6px 5px 0;
    border: 1px solid #dfe4f2;
    border-radius: 8px;
    background: linear-gradient(180deg, #fff, #f8f9fd);
    box-shadow: 0 1px 4px rgba(0, 0, 0, 0.04);
    font-size: 11px;
    color: #6b7280;
}

.t-line {
    display: flex;
    justify-content: space-between;
    padding: 0 3px;
    height: 21px;
    line-height: 18px;
}

.t-line b {
    font-weight: 600;
    letter-spacing: -0.200px;
    color: #333a4a;
}

.t-line.coupon {
    margin-top: 1px;
    line-height: 20px;
    border-radius: 4px;
    background: #ebfdf2;
    color: #178049;
    font-weight: 500;
}

.t-line.coupon b {
    color: #178049;
    font-size: 10px;
    font-weight: 800;
    letter-spacing: 0;
    line-height: 22px;
}

.t-line.total {
    margin: 7px 3px 0;
    padding: 2px 0 0;
    border-top: 1px solid #dde1ea;
    height: 26px;
    line-height: 20px;
}

.t-line.total b {
    font-weight: 800;
    letter-spacing: -0.100px;
    color: #111827;
}

/* Internal notes popup */
.notes {
    position: absolute;
    left: 1372px;
    top: 483px;
    width: 358px;
    height: 236px;
    border-radius: 8px;
    overflow: hidden;
    background: #fff;
    box-shadow: 0 0 0 1px #e3e7f2, 0 12px 40px rgba(15, 23, 42, 0.2);
}

.notes-head {
    display: flex;
    align-items: center;
    justify-content: space-between;
    height: 42px;
    padding: 0 14px;
    background: linear-gradient(135deg, #1e3a8a, #2f5bea);
    color: #fff;
    font-size: 12.500px;
    letter-spacing: -0.350px;
}

.notes-head b {
    font-weight: 800;
}

.notes-close {
    width: 26px;
    height: 20px;
    line-height: 21px;
    border-radius: 4px;
    background: rgba(255, 255, 255, 0.2);
    text-align: center;
    font-size: 16px;
    font-weight: 700;
}

.notes-body {
    height: 135px;
    padding: 12px 14px 0;
}

.note {
    width: 231px;
    height: 48px;
    padding: 5px 10px 0;
    border-radius: 10px 10px 10px 2px;
    background: #f1f5f9;
    white-space: nowrap;
}

.note-meta {
    line-height: 18px;
    font-size: 10.500px;
    letter-spacing: -0.150px;
    color: #64748b;
}

.note-text {
    line-height: 18px;
    font-size: 12px;
    letter-spacing: -0.130px;
    color: #1e293b;
}

.note-input {
    width: 330px;
    height: 47px;
    margin-top: 8px;
    padding: 5px 10px;
    border: 1px solid #d9d9d9;
    border-radius: 4px;
    font-size: 13px;
    letter-spacing: 0.060px;
    line-height: 19px;
    color: #aaa;
    white-space: nowrap;
}

.note-input svg {
    margin: 11px -8px 0 auto;
}

.notes-foot {
    display: flex;
    justify-content: flex-end;
    height: 59px;
    padding: 9px 14px;
    border-top: 1px solid #eef1f6;
    background: #f8fafc;
}

.send {
    width: 64px;
    height: 40px;
    border-radius: 3px;
    background: #3858e9;
    color: #fff;
    font-size: 12.500px;
    font-weight: 600;
}
```
